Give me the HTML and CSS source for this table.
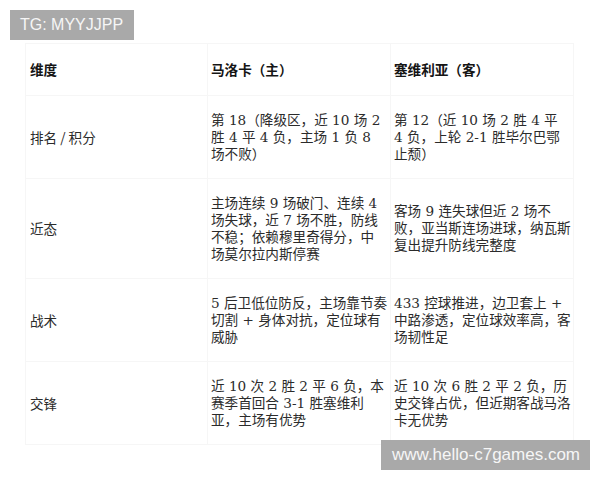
FILE: index.html
```html
<!DOCTYPE html>
<html lang="zh">
<head>
<meta charset="utf-8">
<title>马洛卡 vs 塞维利亚</title>
<link rel="stylesheet" href="styles.css">
</head>
<body>
<div class="page">
  <div class="tag">TG: MYYJJPP</div>
  <table class="cmp">
    <colgroup>
      <col class="c1"><col class="c2"><col class="c3">
    </colgroup>
    <thead>
      <tr>
        <th class="dim">维度</th>
        <th class="home">马洛卡（主）</th>
        <th class="away">塞维利亚（客）</th>
      </tr>
    </thead>
    <tbody>
      <tr>
        <td class="dim">排名 / 积分</td>
        <td class="home">第 18（降级区，近 10 场 2 胜 4 平 4 负，主场 1 负 8 场不败）</td>
        <td class="away">第 12（近 10 场 2 胜 4 平 4&nbsp;负，上轮 2-1 胜毕尔巴鄂止颓）</td>
      </tr>
      <tr>
        <td class="dim">近态</td>
        <td class="home">主场连续 9 场破门、连续 4 场失球，近 7 场不胜，防线不稳；依赖穆里奇得分，中场莫尔拉内斯停赛</td>
        <td class="away">客场 9 连失球但近 2 场不败，亚当斯连场进球，纳瓦斯复出提升防线完整度</td>
      </tr>
      <tr>
        <td class="dim">战术</td>
        <td class="home">5 后卫低位防反，主场靠节奏切割 + 身体对抗，定位球有威胁</td>
        <td class="away">433 控球推进，边卫套上 + 中路渗透，定位球效率高，客场韧性足</td>
      </tr>
      <tr>
        <td class="dim">交锋</td>
        <td class="home">近 10 次 2 胜 2 平 6 负，本赛季首回合 3-1 胜塞维利亚，主场有优势</td>
        <td class="away">近 10 次 6 胜 2 平 2 负，历史交锋占优，但近期客战马洛卡无优势</td>
      </tr>
    </tbody>
  </table>
  <div class="site">www.hello-c7games.com</div>
</div>
</body>
</html>
```
FILE: styles.css
```css
html, body {
  margin: 0;
  padding: 0;
  background: #ffffff;
}
.page {
  position: relative;
  width: 600px;
  height: 480px;
  padding: 10px;
  box-sizing: border-box;
  overflow: hidden;
}
.tag {
  display: inline-block;
  background: #a9a9a9;
  color: #f6f6f6;
  font-family: "Liberation Sans", Arial, sans-serif;
  font-size: 16px;
  line-height: 30px;
  height: 30px;
  padding: 0 11px 0 10px;
  vertical-align: top;
}
.cmp {
  margin: 3px 0 0 15px;
  width: 548px;
  table-layout: fixed;
  border-collapse: collapse;
  font-family: "DejaVu Serif", "Noto Sans CJK SC", serif;
  font-size: 13.6px;
  line-height: 17px;
  color: #2b2b2b;
}
.c1 { width: 182px; }
.c2 { width: 183px; }
.c3 { width: 183px; }
.cmp th,
.cmp td {
  border: 1px solid #f6f6f6;
  padding: 15.5px 0 15.5px 3px;
  text-align: left;
  vertical-align: middle;
}
.cmp th {
  padding-top: 17px;
  padding-bottom: 17px;
  font-family: "Noto Sans CJK SC", sans-serif;
  font-weight: bold;
  color: #151515;
}
.cmp .dim {
  font-family: "Noto Sans CJK SC", sans-serif;
  padding-left: 4px;
}
.cmp .home {
  padding-right: 2.5px;
}
.cmp .away {
  padding-right: 1px;
}
.site {
  position: absolute;
  right: 10px;
  bottom: 10px;
  width: 209px;
  height: 30px;
  box-sizing: border-box;
  background: #a9a9a9;
  color: #f6f6f6;
  font-family: "Liberation Sans", Arial, sans-serif;
  font-size: 17px;
  line-height: 30px;
  padding-left: 11px;
  white-space: nowrap;
}
```
